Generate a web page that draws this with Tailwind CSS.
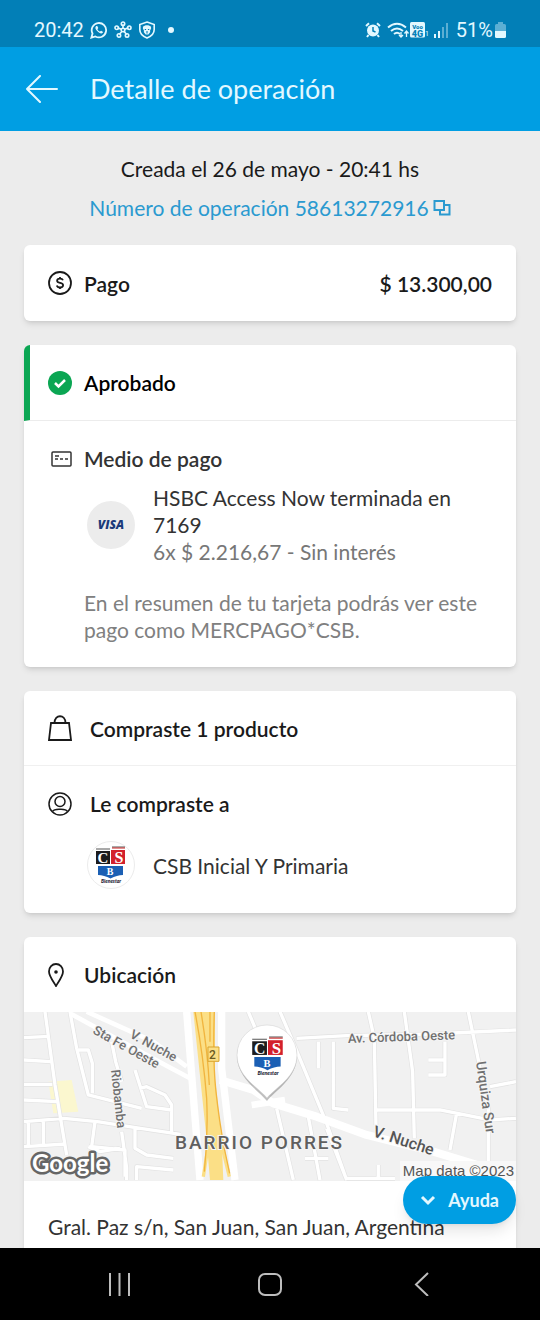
<!DOCTYPE html>
<html lang="es">
<head>
  <meta charset="UTF-8">
  <meta name="viewport" content="width=device-width, initial-scale=1">
  <title>Detalle de operación</title>
  <script src="https://cdn.jsdelivr.net/npm/@tailwindcss/browser@4"></script>
</head>
<body class="bg-[#ececec] h-screen flex flex-col font-['Lato','Open_Sans',sans-serif] text-[21px] leading-[27px] text-[#1a1a1a]">

  <svg class="hidden">
    <symbol id="csb" viewBox="0 0 32 38">
      <path d="M1 3h14M17 1h13" stroke="#555" stroke-width="1"/>
      <path d="M17 2h13" stroke="#c22" stroke-width="1"/>
      <rect x="1" y="5" width="14" height="13" fill="#1c1c1e"/>
      <rect x="16" y="4" width="14" height="14" fill="#d3202c"/>
      <path d="M3 20h25v9q-6 0-12.500 3.500Q9 29 3 29z" fill="#1b5fb4"/>
      <text x="8" y="17" text-anchor="middle" font-family="Liberation Serif, serif" font-size="15" font-weight="700" fill="#fff">C</text>
      <text x="24" y="17" text-anchor="middle" font-family="Liberation Serif, serif" font-size="16" font-weight="700" fill="#fff">S</text>
      <text x="15" y="29" text-anchor="middle" font-family="Liberation Serif, serif" font-size="10" font-weight="700" fill="#fff">B</text>
      <text x="16" y="37" text-anchor="middle" font-family="Lato, sans-serif" font-size="5" font-weight="900" font-style="italic" fill="#223">Bienestar</text>
    </symbol>
  </svg>

  <!-- Barra de estado -->
  <div class="h-[47px] shrink-0 bg-[#027fb7] text-[#e3f8ff] flex items-center justify-between px-[34px] pt-3 font-['Roboto',sans-serif] text-[20px] leading-6">
    <div class="flex items-center gap-[6px]">
      <span>20:42</span>
      <svg class="size-[18px]" viewBox="0 0 20 20" fill="none" stroke="currentColor" stroke-width="2">
        <path d="M1.500 18.500l1.300-4.600A8 8 0 1 1 6 17.200z"/>
        <path d="M6.500 6c-1 1-.6 3 1.500 5.200s4.500 3.200 5.800 2.200c.8-.7.7-1.400 0-1.800l-1.400-.8-1.400 1c-1-.4-2.300-1.700-2.700-2.700l.9-1.200-.8-1.800C8 5.500 7 5.500 6.500 6z" fill="currentColor" stroke="none"/>
      </svg>
      <svg class="size-[18px]" viewBox="0 0 20 20" fill="none" stroke="currentColor" stroke-width="1.800">
        <path d="M10 10V4M10 10l6-2.500M10 10l4 5M10 10l-4 5M10 10L4 7.500"/>
        <circle cx="10" cy="10" r="2" fill="#027fb7"/>
        <circle cx="10" cy="3" r="1.900"/><circle cx="17" cy="7.500" r="1.900"/><circle cx="14.500" cy="16" r="1.900"/><circle cx="5.500" cy="16" r="1.900"/><circle cx="3" cy="7.500" r="1.900"/>
      </svg>
      <svg class="size-[18px]" viewBox="0 0 20 20" fill="none" stroke="currentColor" stroke-width="1.800">
        <path d="M10 1.200L18 4v5.500c0 4.500-3 7.500-8 9.500-5-2-8-5-8-9.500V4z"/>
        <path d="M5.500 6.500C7 4 13 4 14.500 6.500V9l-1 1v2.500l-2 2.500h-3l-2-2.500V10l-1-1z" fill="currentColor" stroke="none"/>
        <path d="M7.500 9.500h1.500M11 9.500h1.500M10 11v3" stroke="#027fb7" stroke-width="1.200"/>
      </svg>
      <span class="size-[6px] rounded-full bg-current ml-[6px]"></span>
    </div>
    <div class="flex items-center gap-1">
      <svg class="size-4" viewBox="0 0 16 16" fill="none" stroke="currentColor">
        <circle cx="8" cy="8.500" r="6" fill="currentColor" stroke="none"/>
        <path d="M1 4l3-2.700M15 4l-3-2.700M3.500 13L2 15M12.500 13l1.500 2" stroke-width="2"/>
        <path d="M8 5v4l2.500 1" stroke="#027fb7" stroke-width="1.500"/>
      </svg>
      <svg class="w-[23px] h-4 -mr-1 ml-0.5" viewBox="0 0 23 16" fill="none" stroke="currentColor" stroke-width="2">
        <path d="M1 5.500Q10-2 19 5.500M4 9q6-5 12 0M7 12q3-2.500 6 0"/>
        <path d="M14 10v5m-2-2l2 2 2-2M19.500 15V9m-2 2.500l2-2.500 2 2.500" stroke-width="1.300"/>
      </svg>
      <svg class="w-5 h-4" viewBox="0 0 20 16">
        <rect width="15" height="15.500" rx="1.500" fill="currentColor"/>
        <text x="7.500" y="6.500" text-anchor="middle" font-size="6" font-weight="900" fill="#027fb7">Voo</text>
        <text x="7.500" y="14.500" text-anchor="middle" font-size="9" font-weight="900" fill="#027fb7">4G</text>
        <text x="15" y="14" font-size="7" fill="currentColor">1</text>
      </svg>
      <svg class="w-[14px] h-4" viewBox="0 0 14 16" stroke="currentColor" stroke-width="2">
        <path d="M1 16v-4M5 16V9"/><path d="M9 16V5M13 16V1" opacity=".4"/>
      </svg>
      <span class="ml-1">51%</span>
      <svg class="w-[11px] h-4 -ml-0.5" viewBox="0 0 11 16" fill="currentColor">
        <path d="M3 0h5v2h1.500Q11 2 11 3.500V9H0V3.500Q0 2 1.500 2H3z" opacity=".4"/>
        <path d="M0 9h11v5.500q0 1.500-1.500 1.500h-8Q0 16 0 14.500z"/>
      </svg>
    </div>
  </div>

  <header class="h-[84px] shrink-0 bg-[#009ee3] text-[#e3f8ff] flex items-center gap-8 px-[26px]">
    <button type="button" aria-label="Volver">
      <svg class="w-8 h-7 block" viewBox="0 0 32 28" fill="none" stroke="currentColor" stroke-width="2" stroke-linecap="round" stroke-linejoin="round"><path d="M31 14H1M14 1L1 14l13 13"/></svg>
    </button>
    <h1 class="text-[27px] leading-8">Detalle de operación</h1>
  </header>

  <div class="relative flex-1 min-h-0">
    <main class="h-full overflow-y-auto [scrollbar-width:none] px-6 pt-6 flex flex-col gap-6">
      <div class="text-center flex flex-col gap-3">
        <p>Creada el 26 de mayo - 20:41 hs</p>
        <p><a href="#" class="text-[#2a9ad0] inline-flex items-center gap-1">Número de operación 58613272916
          <svg class="w-[18px] h-4" viewBox="0 0 18 16" fill="none" stroke="currentColor" stroke-width="2"><path d="M6 10H1.500V1H11v4"/><path d="M11 5h5.500v9.500H7V10"/><path d="M11 4v6H6"/></svg></a></p>
      </div>

      <section class="bg-white rounded-md shadow-md h-[76px] shrink-0 px-6 flex items-center gap-3 font-semibold">
        <svg class="size-6" viewBox="0 0 24 24" fill="none" stroke="currentColor" stroke-width="1.800">
          <circle cx="12" cy="12" r="11"/>
          <path d="M15 9.300C14.500 8 13.400 7.600 12 7.600c-1.700 0-2.900.8-2.900 2.100 0 3.100 6 1.400 6 4.500 0 1.400-1.300 2.200-3.100 2.200-1.600 0-2.800-.6-3.200-1.900M12 6v2M12 16v2"/>
        </svg>
        <h2>Pago</h2>
        <p class="ml-auto">$ 13.300,00</p>
      </section>

      <section class="bg-white rounded-md shadow-md shrink-0 overflow-hidden">
        <div class="h-[76px] flex items-center gap-3 pl-[18px] pr-6 border-l-[6px] border-l-[#0ba653] border-b border-b-[#ececec] text-black">
          <svg class="size-6" viewBox="0 0 24 24"><circle cx="12" cy="12" r="12" fill="#0ba653"/><path d="M7 12l3.500 3.500L17 9" fill="none" stroke="#fff" stroke-width="2.500"/></svg>
          <h2 class="font-semibold">Aprobado</h2>
        </div>
        <div class="p-6">
          <div class="flex items-center gap-3 text-[#333]">
            <svg class="w-6 h-4" viewBox="0 0 24 16" fill="none" stroke="currentColor" stroke-width="1.500"><rect x="4" y="1" width="19" height="14" rx="1"/><path d="M7 5h4M7 8h3M12 8h3M17 8h3"/></svg>
            <h2 class="font-semibold">Medio de pago</h2>
          </div>
          <div class="mt-3 pl-[39px] flex items-center gap-[18px]">
            <div class="size-12 shrink-0 rounded-full bg-[#ececec] flex items-center justify-center font-['Open_Sans',sans-serif] text-[12px] font-extrabold italic text-[#1b3a7a]">VISA</div>
            <div>
              <p class="text-[#333]">HSBC Access Now terminada en 7169</p>
              <p class="text-[#777]">6x $ 2.216,67 - Sin interés</p>
            </div>
          </div>
          <p class="mt-6 pl-9 text-[#808080]">En el resumen de tu tarjeta podrás ver este pago como MERCPAGO*CSB.</p>
        </div>
      </section>

      <section class="bg-white rounded-md shadow-md shrink-0">
        <div class="h-[75px] flex items-center gap-[18px] px-6 border-b border-[#f0f0f0]">
          <svg class="w-6 h-[26px]" viewBox="0 0 24 26" fill="none" stroke="currentColor" stroke-width="1.800"><path d="M3 8h18l2 17H1z"/><path d="M6.500 8c0-9 11-9 11 0"/></svg>
          <h2 class="font-semibold">Compraste 1 producto</h2>
        </div>
        <div class="p-6 flex flex-col gap-6">
          <div class="flex items-center gap-[18px]">
            <svg class="size-6" viewBox="0 0 24 24" fill="none" stroke="currentColor" stroke-width="1.500"><circle cx="12" cy="12" r="11"/><circle cx="12" cy="9.500" r="5"/><path d="M4.500 19.500C6 17 9 17.300 12 17.300s6-.3 7.500 2.200"/></svg>
            <h2 class="font-semibold">Le compraste a</h2>
          </div>
          <div class="pl-[39px] flex items-center gap-[18px]">
            <div class="size-12 shrink-0 rounded-full border border-[#ececec] flex items-center justify-center">
              <svg class="w-8 h-[38px]"><use href="#csb"/></svg>
            </div>
            <p class="text-[#333]">CSB Inicial Y Primaria</p>
          </div>
        </div>
      </section>

      <section class="bg-white rounded-t-md shadow-md shrink-0">
        <div class="h-[75px] flex items-center gap-5 px-6">
          <svg class="w-4 h-6" viewBox="0 0 16 24" fill="none" stroke="currentColor" stroke-width="1.800"><path d="M8 23C5 18 1 13 1 8.500a7 7.500 0 0 1 14 0C15 13 11 18 8 23z"/><circle cx="8" cy="9" r="1.800" fill="currentColor" stroke="none"/></svg>
          <h2 class="font-semibold">Ubicación</h2>
        </div>
        <svg class="block w-full bg-[#f1f1f1] font-['Roboto',sans-serif]" viewBox="0 0 492 169" preserveAspectRatio="xMidYMid slice">
          <g transform="translate(-4 -7) scale(.3333)" fill="none" stroke-linejoin="round">
            <!-- plaza -->
            <path d="M85 230l70-5 20 95-75 5z" fill="#fbf7cf"/>
            <!-- calles -->
            <g stroke="#e2e2e2" stroke-width="14">
              <path id="calles" d="M75 20l30 220 35 210M12 98l75-4M12 165l80 5M12 238h85M12 285l100 5M12 350l120-10 100 10 130 20 120 18M25 350v75M70 350v72M12 425l125-8M150 20l20 110 35 140 160 40M175 135h30l12 40v90M275 110l12 60 18 60M305 380l15 110v35M345 195l35 110 75 10v75M360 250l20-5 55 25 20 30v20M345 370v60l35 20 80 10M225 350l-10 75 100 10v80M205 425l35 15 60-10M350 525v-40l110 10M685 20l25 60M780 20l45 105 95 230 60 170M830 100l150-8 260-5 248-12M895 110v80M940 110v200l45 5M1045 20l18 80 5 260M1153 20l25 180 5 200M1275 110v100h-50M1225 165h50M1345 20l25 120 35 170v170M1070 315h190l150 30 78-5M1410 245l78-15M1310 325l-20 110M770 310l50 215M865 335l35 190M855 460h70M920 370l60 155M980 520h145M1075 480v35"/>
            </g>
            <use href="#calles" stroke="#fff" stroke-width="10"/>
            <g stroke="#fff">
              <path d="M200 20l200 90 100 75" stroke-width="14"/>
              <path d="M150 25q200 110 370 200" stroke-width="14"/>
              <path d="M600 225l100 30 60 40 130 40 150 55 200 50 248 75" stroke-width="24"/>
              <path d="M695 300l100-15" stroke-width="20"/>
              <path d="M500 20l40 505M605 20v170l40 335" stroke-width="22"/>
            </g>
            <!-- autopista -->
            <path d="M520 20h65v200l20 180 5 125h-40l-12-140z" fill="#fbdf86"/>
            <path d="M568 400l-18 115M600 400l28 115" stroke="#fbdf86" stroke-width="10"/>
            <path d="M525 20q25 130 35 260 5 110-7 220M543 20q20 120 25 220M583 20q-5 150 5 240t25 170l16 75M570 20v90" stroke="#f1b53f" stroke-width="4"/>
            <rect x="564" y="126" width="33" height="43" fill="#fbdf86" stroke="#d9a52f" stroke-width="3"/>
          </g>
          <g fill="#707070" font-size="13" font-weight="500" stroke="#f5f5f5" stroke-width="2" paint-order="stroke">
            <text x="185" y="47" font-size="12" fill="#6b5a20" stroke="none">2</text>
            <text transform="translate(105 25) rotate(29)">V. Nuche</text>
            <text transform="translate(68 21) rotate(29)">Sta Fe Oeste</text>
            <text transform="translate(87 58) rotate(84)">Riobamba</text>
            <text transform="translate(324 31) rotate(-2)">Av. Córdoba Oeste</text>
            <text transform="translate(452 50) rotate(82)" font-size="14">Urquiza Sur</text>
            <text transform="translate(348 124) rotate(18)" font-size="16" fill="#555">V. Nuche</text>
            <text x="151" y="137" font-size="19" letter-spacing="2" fill="#5f5f5f">BARRIO PORRES</text>
          </g>
          <path d="M243 88C235 78 213 65 213 43a30 30 0 0 1 60 0c0 22-22 35-30 45z" fill="#000" opacity=".25" transform="translate(0 1)"/>
          <path d="M243 86C235 76 213 65 213 43a30 30 0 0 1 60 0c0 22-22 33-30 43z" fill="#fff" stroke="#ccc" stroke-width=".5"/>
          <use href="#csb" x="227" y="24" width="34" height="40"/>
          <text x="8" y="160" font-family="Lato, sans-serif" font-size="24" font-weight="700" fill="#fff" stroke="#666" stroke-width="5" stroke-linejoin="round" paint-order="stroke">Google</text>
          <rect x="376" y="149" width="116" height="20" fill="#f8f8f8"/>
          <text x="490" y="164" text-anchor="end" font-size="15" font-family="Liberation Sans, sans-serif" fill="#555">Map data ©2023</text>
        </svg>
        <p class="px-6 pt-8 pb-6 text-[#333]">Gral. Paz s/n, San Juan, San Juan, Argentina</p>
      </section>
    </main>

    <button type="button" class="absolute right-6 bottom-6 h-12 px-[17px] rounded-full bg-[#009ee3] text-[#e3f8ff] text-[18px] font-bold shadow-lg flex items-center gap-3">
      <svg class="w-4 h-3" viewBox="0 0 16 12" fill="none" stroke="currentColor" stroke-width="3"><path d="M2 3l6 6 6-6"/></svg>
      Ayuda
    </button>
  </div>

  <nav class="h-[72px] shrink-0 bg-black text-[#bdbdbd] flex items-center justify-between px-[108px]">
    <button type="button" aria-label="Recientes"><svg class="size-6 block" viewBox="0 0 24 24" fill="none" stroke="currentColor" stroke-width="2"><path d="M2 1v23M11.500 1v23M21 1v23"/></svg></button>
    <button type="button" aria-label="Inicio"><svg class="size-6 block" viewBox="0 0 24 24" fill="none" stroke="currentColor" stroke-width="2"><rect x="1" y="2" width="22" height="21" rx="6"/></svg></button>
    <button type="button" aria-label="Atrás"><svg class="size-6 block" viewBox="0 0 24 24" fill="none" stroke="currentColor" stroke-width="2"><path d="M20 1L8 12.500 20 24"/></svg></button>
  </nav>

</body>
</html>
